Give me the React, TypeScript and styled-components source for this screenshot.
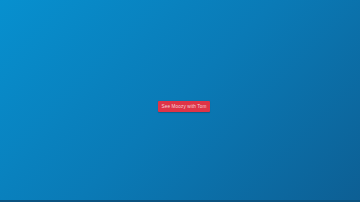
import React from "react";
import styled, { createGlobalStyle } from "styled-components";

const Global = createGlobalStyle`
  html, body { margin: 0; padding: 0; width: 100%; height: 100%; }
  #root { width: 100%; height: 100%; }
  body { font-family: "Liberation Sans", Arial, sans-serif; }
`;

const Page = styled.div`
  width: 360px;
  height: 202px;
  box-sizing: border-box;
  display: flex;
  align-items: center;
  justify-content: center;
  background: linear-gradient(135deg, #0790cf 0%, #0a7ab6 50%, #0d5f94 100%);
  border-bottom: 2px solid #0b527f;
`;

const Button = styled.button`
  width: 52px;
  height: 11px;
  padding: 0;
  border: none;
  border-radius: 1px;
  background: #de3447;
  color: #f3d3d8;
  font-family: "Liberation Sans", Arial, sans-serif;
  font-size: 4.7px;
  letter-spacing: 0.1px;
  line-height: 11px;
  white-space: nowrap;
  margin-left: 8px;
  margin-top: 12px;
  box-shadow: 0 0.5px 1px rgba(0, 0, 0, 0.2);
`;

export default function App() {
  return (
    <>
      <Global />
      <Page>
        <Button>See Moozy with Tom</Button>
      </Page>
    </>
  );
}
